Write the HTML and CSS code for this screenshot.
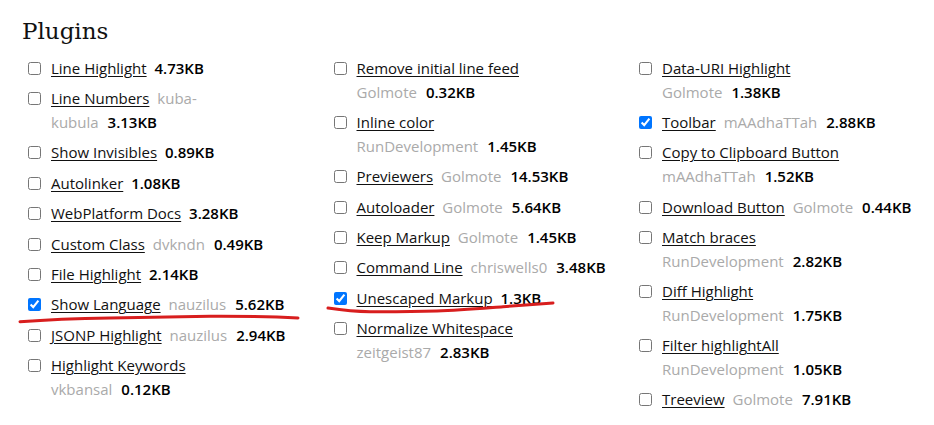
FILE: index.html
```html
<!DOCTYPE html>
<html lang="en">
<head>
<meta charset="utf-8">
<title>Plugins</title>
<link rel="stylesheet" href="styles.css">
</head>
<body>
<section class="page">
  <h2 class="title">Plugins</h2>
  <div class="cols">
    <ul class="col">
      <li class="item"><input type="checkbox" class="cb"><span class="txt"><a class="name" href="#">Line Highlight</a> <span class="meta"><span class="size">4.73KB</span></span></span></li>
      <li class="item"><input type="checkbox" class="cb"><span class="txt"><a class="name" href="#">Line Numbers</a> <span class="meta"><span class="author">kuba-<br>kubula</span><span class="size">3.13KB</span></span></span></li>
      <li class="item"><input type="checkbox" class="cb"><span class="txt"><a class="name" href="#">Show Invisibles</a> <span class="meta"><span class="size">0.89KB</span></span></span></li>
      <li class="item"><input type="checkbox" class="cb"><span class="txt"><a class="name" href="#">Autolinker</a> <span class="meta"><span class="size">1.08KB</span></span></span></li>
      <li class="item"><input type="checkbox" class="cb"><span class="txt"><a class="name" href="#">WebPlatform Docs</a> <span class="meta"><span class="size">3.28KB</span></span></span></li>
      <li class="item"><input type="checkbox" class="cb"><span class="txt"><a class="name" href="#">Custom Class</a> <span class="meta"><span class="author">dvkndn</span><span class="size">0.49KB</span></span></span></li>
      <li class="item"><input type="checkbox" class="cb"><span class="txt"><a class="name" href="#">File Highlight</a> <span class="meta"><span class="size">2.14KB</span></span></span></li>
      <li class="item"><input type="checkbox" class="cb" checked><span class="txt"><a class="name" href="#">Show Language</a> <span class="meta"><span class="author">nauzilus</span><span class="size">5.62KB</span></span></span></li>
      <li class="item"><input type="checkbox" class="cb"><span class="txt"><a class="name" href="#">JSONP Highlight</a> <span class="meta"><span class="author">nauzilus</span><span class="size">2.94KB</span></span></span></li>
      <li class="item"><input type="checkbox" class="cb"><span class="txt"><a class="name" href="#">Highlight Keywords</a> <span class="meta block"><span class="author">vkbansal</span><span class="size">0.12KB</span></span></span></li>
    </ul>
    <ul class="col">
      <li class="item"><input type="checkbox" class="cb"><span class="txt"><a class="name" href="#">Remove initial line feed</a> <span class="meta block"><span class="author">Golmote</span><span class="size">0.32KB</span></span></span></li>
      <li class="item"><input type="checkbox" class="cb"><span class="txt"><a class="name" href="#">Inline color</a> <span class="meta block"><span class="author">RunDevelopment</span><span class="size">1.45KB</span></span></span></li>
      <li class="item"><input type="checkbox" class="cb"><span class="txt"><a class="name" href="#">Previewers</a> <span class="meta"><span class="author">Golmote</span><span class="size">14.53KB</span></span></span></li>
      <li class="item"><input type="checkbox" class="cb"><span class="txt"><a class="name" href="#">Autoloader</a> <span class="meta"><span class="author">Golmote</span><span class="size">5.64KB</span></span></span></li>
      <li class="item"><input type="checkbox" class="cb"><span class="txt"><a class="name" href="#">Keep Markup</a> <span class="meta"><span class="author">Golmote</span><span class="size">1.45KB</span></span></span></li>
      <li class="item"><input type="checkbox" class="cb"><span class="txt"><a class="name" href="#">Command Line</a> <span class="meta"><span class="author">chriswells0</span><span class="size">3.48KB</span></span></span></li>
      <li class="item"><input type="checkbox" class="cb" checked><span class="txt"><a class="name" href="#">Unescaped Markup</a> <span class="meta"><span class="size">1.3KB</span></span></span></li>
      <li class="item"><input type="checkbox" class="cb"><span class="txt"><a class="name" href="#">Normalize Whitespace</a> <span class="meta block"><span class="author">zeitgeist87</span><span class="size">2.83KB</span></span></span></li>
    </ul>
    <ul class="col">
      <li class="item"><input type="checkbox" class="cb"><span class="txt"><a class="name" href="#">Data-URI Highlight</a> <span class="meta block"><span class="author">Golmote</span><span class="size">1.38KB</span></span></span></li>
      <li class="item"><input type="checkbox" class="cb" checked><span class="txt"><a class="name" href="#">Toolbar</a> <span class="meta"><span class="author">mAAdhaTTah</span><span class="size">2.88KB</span></span></span></li>
      <li class="item"><input type="checkbox" class="cb"><span class="txt"><a class="name" href="#">Copy to Clipboard Button</a> <span class="meta block"><span class="author">mAAdhaTTah</span><span class="size">1.52KB</span></span></span></li>
      <li class="item"><input type="checkbox" class="cb"><span class="txt"><a class="name" href="#">Download Button</a> <span class="meta"><span class="author">Golmote</span><span class="size">0.44KB</span></span></span></li>
      <li class="item"><input type="checkbox" class="cb"><span class="txt"><a class="name" href="#">Match braces</a> <span class="meta block"><span class="author">RunDevelopment</span><span class="size">2.82KB</span></span></span></li>
      <li class="item"><input type="checkbox" class="cb"><span class="txt"><a class="name" href="#">Diff Highlight</a> <span class="meta block"><span class="author">RunDevelopment</span><span class="size">1.75KB</span></span></span></li>
      <li class="item"><input type="checkbox" class="cb"><span class="txt"><a class="name" href="#">Filter highlightAll</a> <span class="meta block"><span class="author">RunDevelopment</span><span class="size">1.05KB</span></span></span></li>
      <li class="item"><input type="checkbox" class="cb"><span class="txt"><a class="name" href="#">Treeview</a> <span class="meta"><span class="author">Golmote</span><span class="size">7.91KB</span></span></span></li>
    </ul>
  </div>
  <svg class="marks" width="934" height="425" viewBox="0 0 934 425" aria-hidden="true">
    <path d="M20 321.7 C 50 319.5, 80 318.5, 110 318 C 150 317, 180 316.5, 210 316.2 C 250 316, 280 317, 298 318" />
    <path d="M328 308 C 345 310.5, 355 311.5, 370 311.7 C 400 311.8, 420 311.5, 437 311 C 460 310, 485 308, 503 306.7 C 520 305.5, 540 304, 553 303" />
  </svg>
</section>
</body>
</html>
```
FILE: styles.css
```css
html, body {
  margin: 0;
  padding: 0;
  background: #fff;
}

.page {
  position: relative;
  width: 934px;
  height: 425px;
  box-sizing: border-box;
  padding: 14px 0 0 22px;
  font-family: "Open Sans", "Liberation Sans", sans-serif;
  font-size: 15px;
  color: #111;
}

.title {
  margin: 0 0 9px 0;
  font-family: "DejaVu Serif", "Liberation Serif", serif;
  font-weight: 400;
  font-size: 23px;
  line-height: 34px;
  color: #111;
}

.cols {
  display: grid;
  grid-template-columns: repeat(3, 305.5px);
}

.col {
  list-style: none;
  margin: 0;
  padding: 0 6px 0 6px;
}

.item {
  display: flex;
  align-items: flex-start;
  gap: 10px;
  margin-bottom: 6.7px;
  line-height: 23.7px;
}

.cb {
  flex: none;
  width: 13px;
  height: 13px;
  margin: 5px 0 0 0;
}

.txt {
  flex: 1;
  min-width: 0;
}

.name {
  color: #111;
  text-decoration: underline;
  text-underline-offset: 2px;
  margin-right: 4px;
}

.meta.block {
  display: block;
}

.author {
  color: #aaa;
}

.size {
  font-weight: 600;
  color: #000;
}

.author + .size {
  margin-left: 9px;
}

.marks {
  position: absolute;
  left: 0;
  top: 0;
  pointer-events: none;
}

.marks path {
  fill: none;
  stroke: #d81e1e;
  stroke-width: 3;
  stroke-linecap: round;
}
```
